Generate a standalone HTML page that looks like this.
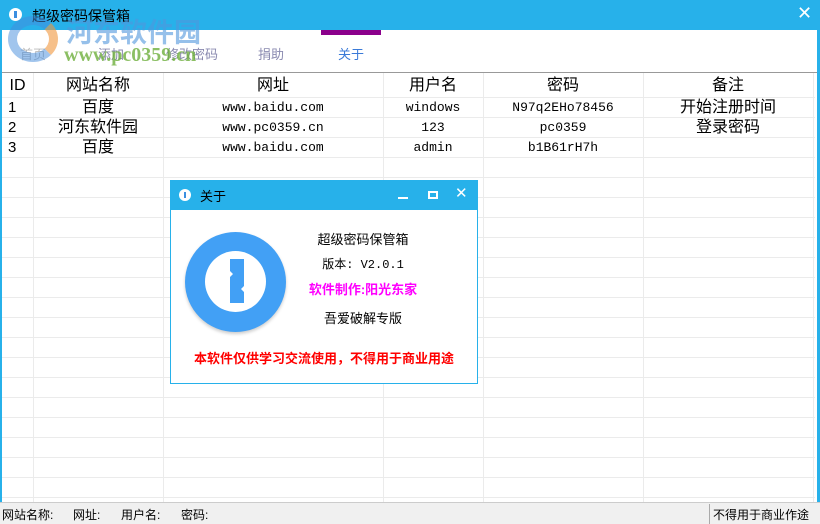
<!DOCTYPE html>
<html><head><meta charset="utf-8"><style>
*{margin:0;padding:0;box-sizing:border-box}
body{width:820px;height:524px;overflow:hidden;background:#fff;font-family:"Liberation Sans","Noto Sans CJK SC",sans-serif;position:relative}
.abs{position:absolute}
.cn{font-family:"Liberation Sans","Noto Sans CJK SC",sans-serif}
.mono{font-family:"Liberation Mono","Noto Sans CJK SC",monospace}
.hl{position:absolute;left:2px;width:813px;height:1px;background:#ebebeb}
.vl{position:absolute;top:73px;width:1px;height:430px;background:#ebebeb}
.c{position:absolute;text-align:center;font-size:14px;line-height:20px;color:#000}
.c.mono{font-size:13px}
</style></head><body>
<div class="abs" style="left:0;top:0;width:820px;height:30px;background:#27b1ea"></div>
<div class="abs" style="left:9px;top:8px;width:13px;height:13px;border-radius:50%;background:#fff"><div class="abs" style="left:5px;top:3px;width:3px;height:7px;background:#3b8fe0"></div></div>
<div class="abs cn" style="left:32px;top:6px;font-size:14px;color:#000">超级密码保管箱</div>
<div class="abs" style="left:797px;top:3px;font-size:18px;color:#fff">✕</div>
<div class="abs" style="left:0;top:30px;width:2px;height:473px;background:#27b1ea"></div>
<div class="abs" style="left:817px;top:30px;width:3px;height:473px;background:#27b1ea"></div>
<div class="abs" style="left:321px;top:30px;width:60px;height:5px;background:#8b008b"></div>
<div class="abs cn" style="left:20px;top:44px;font-size:13px;color:#bbb">首页</div>
<div class="abs cn" style="left:98px;top:44px;font-size:13px;color:#8a8ab0">添加</div>
<div class="abs cn" style="left:166px;top:44px;font-size:13px;color:#8a8ab0">修改密码</div>
<div class="abs cn" style="left:258px;top:44px;font-size:13px;color:#8a8ab0">捐助</div>
<div class="abs cn" style="left:338px;top:44px;font-size:13px;color:#3a7ad8">关于</div>
<div class="abs cn" style="left:66px;top:11px;font-size:27px;font-weight:bold;color:rgba(80,150,220,0.6);letter-spacing:0px">河东软件园</div>
<div class="abs" style="left:64px;top:44px;font-size:20px;font-weight:bold;font-family:'Liberation Serif',serif;color:rgba(110,175,60,0.8)">www.pc0359.cn</div>
<div class="abs" style="left:8px;top:16px;width:50px;height:46px;border-radius:50%;border:9px solid rgba(70,140,220,0.5);border-right-color:rgba(240,150,60,0.6)"></div>
<div class="abs" style="left:2px;top:72px;width:815px;height:1px;background:#999"></div>
<div class="hl" style="top:97px"></div><div class="hl" style="top:117px"></div><div class="hl" style="top:137px"></div><div class="hl" style="top:157px"></div><div class="hl" style="top:177px"></div><div class="hl" style="top:197px"></div><div class="hl" style="top:217px"></div><div class="hl" style="top:237px"></div><div class="hl" style="top:257px"></div><div class="hl" style="top:277px"></div><div class="hl" style="top:297px"></div><div class="hl" style="top:317px"></div><div class="hl" style="top:337px"></div><div class="hl" style="top:357px"></div><div class="hl" style="top:377px"></div><div class="hl" style="top:397px"></div><div class="hl" style="top:417px"></div><div class="hl" style="top:437px"></div><div class="hl" style="top:457px"></div><div class="hl" style="top:477px"></div><div class="hl" style="top:497px"></div>
<div class="vl" style="left:33px"></div><div class="vl" style="left:163px"></div><div class="vl" style="left:383px"></div><div class="vl" style="left:483px"></div><div class="vl" style="left:643px"></div><div class="vl" style="left:813px"></div>
<div class="c" style="left:2px;top:76px;width:31px;font-size:16px">ID</div>
<div class="c" style="left:33px;top:76px;width:130px;font-size:16px">网站名称</div>
<div class="c" style="left:163px;top:76px;width:220px;font-size:16px">网址</div>
<div class="c" style="left:383px;top:76px;width:100px;font-size:16px">用户名</div>
<div class="c" style="left:483px;top:76px;width:160px;font-size:16px">密码</div>
<div class="c" style="left:643px;top:76px;width:170px;font-size:16px">备注</div>
<div class="c" style="left:2px;top:98px;width:24px;text-align:left;padding-left:6px;font-size:15px">1</div>
<div class="c" style="left:33px;top:98px;width:130px;font-size:16px">百度</div>
<div class="c mono" style="left:163px;top:98px;width:220px">www.baidu.com</div>
<div class="c mono" style="left:383px;top:98px;width:100px">windows</div>
<div class="c mono" style="left:483px;top:98px;width:160px">N97q2EHo78456</div>
<div class="c" style="left:643px;top:98px;width:170px;font-size:16px">开始注册时间</div>
<div class="c" style="left:2px;top:118px;width:24px;text-align:left;padding-left:6px;font-size:15px">2</div>
<div class="c" style="left:33px;top:118px;width:130px;font-size:16px">河东软件园</div>
<div class="c mono" style="left:163px;top:118px;width:220px">www.pc0359.cn</div>
<div class="c mono" style="left:383px;top:118px;width:100px">123</div>
<div class="c mono" style="left:483px;top:118px;width:160px">pc0359</div>
<div class="c" style="left:643px;top:118px;width:170px;font-size:16px">登录密码</div>
<div class="c" style="left:2px;top:138px;width:24px;text-align:left;padding-left:6px;font-size:15px">3</div>
<div class="c" style="left:33px;top:138px;width:130px;font-size:16px">百度</div>
<div class="c mono" style="left:163px;top:138px;width:220px">www.baidu.com</div>
<div class="c mono" style="left:383px;top:138px;width:100px">admin</div>
<div class="c mono" style="left:483px;top:138px;width:160px">b1B61rH7h</div>
<div class="abs" style="left:0;top:502px;width:820px;height:22px;background:#f0f0f0;border-top:1px solid #ccc"></div>
<div class="abs cn" style="left:2px;top:506px;font-size:12px;color:#000">网站名称:</div>
<div class="abs cn" style="left:73px;top:506px;font-size:12px;color:#000">网址:</div>
<div class="abs cn" style="left:121px;top:506px;font-size:12px;color:#000">用户名:</div>
<div class="abs cn" style="left:181px;top:506px;font-size:12px;color:#000">密码:</div>
<div class="abs" style="left:709px;top:504px;width:1px;height:20px;background:#aaa"></div>
<div class="abs cn" style="left:713px;top:506px;font-size:12px;color:#000">不得用于商业作途</div>
<!-- dialog -->
<div class="abs" style="left:170px;top:180px;width:308px;height:204px;background:#fff;border:1px solid #27b1ea"></div>
<div class="abs" style="left:170px;top:180px;width:308px;height:30px;background:#27b1ea"></div>
<div class="abs" style="left:179px;top:189px;width:12px;height:12px;border-radius:50%;background:#fff"><div class="abs" style="left:5px;top:3px;width:2px;height:6px;background:#3b8fe0"></div></div>
<div class="abs cn" style="left:200px;top:186px;font-size:13px;color:#000">关于</div>
<div class="abs" style="left:398px;top:197px;width:10px;height:2px;background:#fff"></div>
<div class="abs" style="left:428px;top:191px;width:10px;height:8px;border:2px solid #fff"></div>
<div class="abs" style="left:455px;top:184px;font-size:15px;color:#fff">✕</div>
<div class="abs" style="left:185px;top:232px;width:101px;height:100px;border-radius:50%;background:#42a0f5;box-shadow:0 2px 3px rgba(0,0,0,0.2)"></div>
<div class="abs" style="left:205px;top:251px;width:61px;height:61px;border-radius:50%;background:#fff"></div>
<svg class="abs" style="left:230px;top:259px" width="15" height="45" viewBox="0 0 15 45"><path d="M0 0H14V27L11 30L14 33V44H0V18L3 15L0 12Z" fill="#42a0f5"/></svg>
<div class="abs cn" style="left:170px;top:229px;width:386px;text-align:center;font-size:13px;color:#000">超级密码保管箱</div>
<div class="abs mono" style="left:170px;top:255px;width:386px;text-align:center;font-size:12px;color:#000">版本: V2.0.1</div>
<div class="abs cn" style="left:170px;top:279px;width:386px;text-align:center;font-size:13px;font-weight:bold;color:#f0f">软件制作:阳光东家</div>
<div class="abs cn" style="left:170px;top:308px;width:386px;text-align:center;font-size:13px;color:#000">吾爱破解专版</div>
<div class="abs cn" style="left:170px;top:348px;width:308px;text-align:center;font-size:13px;font-weight:bold;color:#f00">本软件仅供学习交流使用，不得用于商业用途</div>
</body></html>
